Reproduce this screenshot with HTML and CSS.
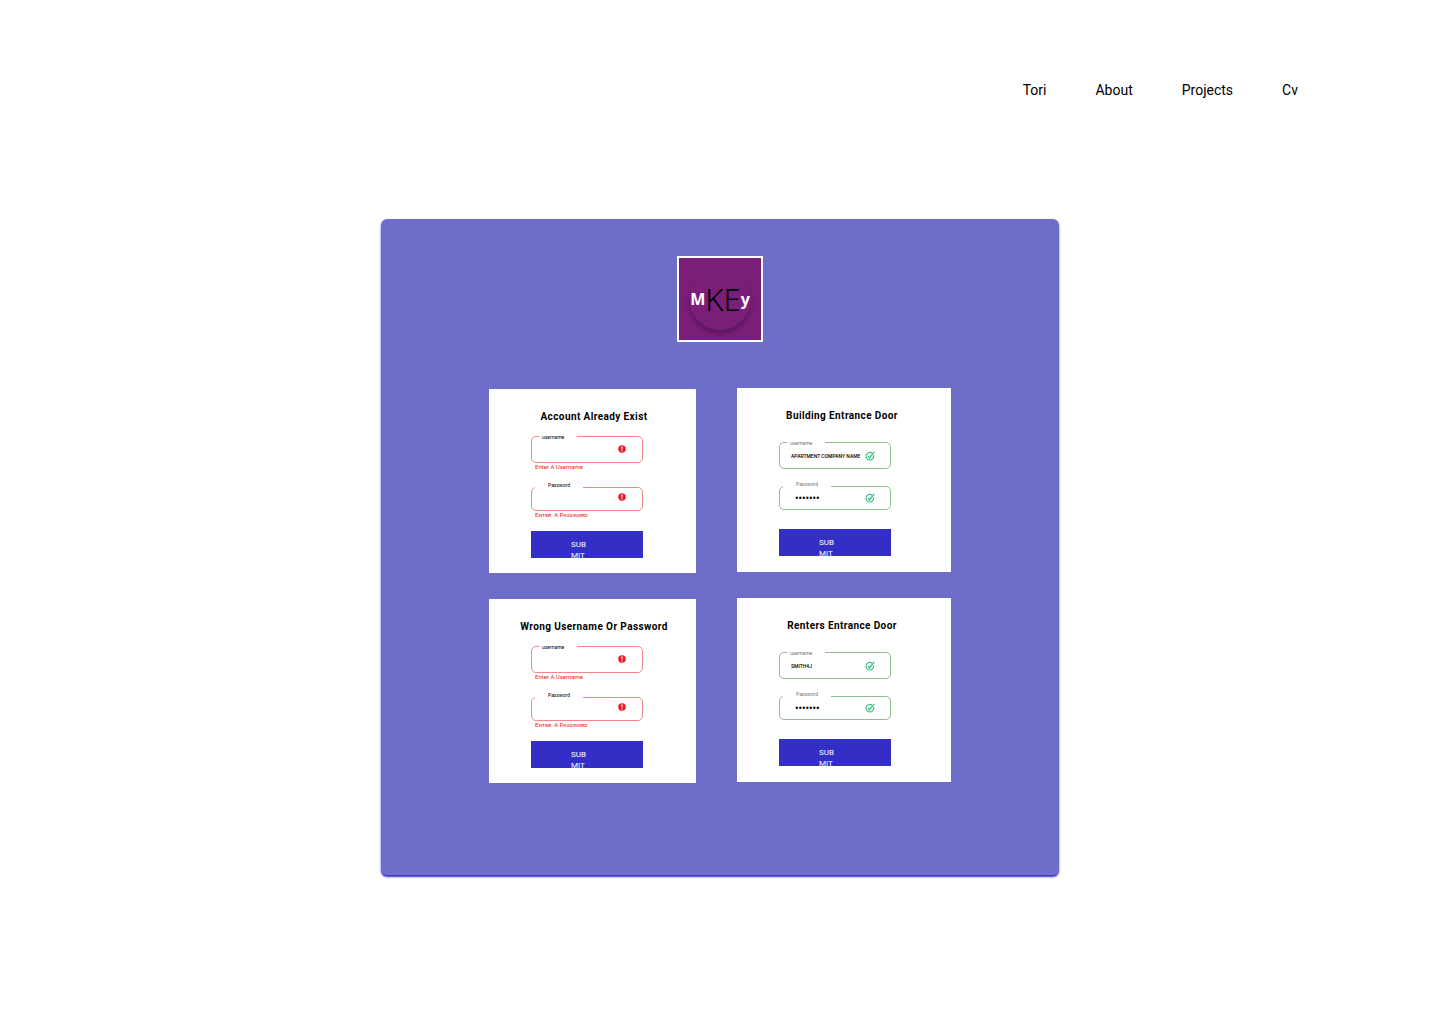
FILE: index.html
```html
<!DOCTYPE html>
<html lang="en">
<head>
<meta charset="utf-8">
<meta name="viewport" content="width=device-width, initial-scale=1">
<title>MKEy</title>
<link rel="stylesheet" href="styles.css">
</head>
<body>
<svg class="sprite" aria-hidden="true">
  <symbol id="icon-error" viewBox="0 0 8 8">
    <circle cx="4" cy="4" r="3.8" fill="#ec1c28"/>
    <path d="M3.3 1.5h1.4L4.4 4.7h-.8z" fill="#fff"/>
    <circle cx="4" cy="5.9" r=".6" fill="#fff"/>
  </symbol>
  <symbol id="icon-check" viewBox="0 0 10 10">
    <path d="M7.3 2.3A3.8 3.8 0 1 0 8.5 4.2" fill="none" stroke="#2fc47c" stroke-width="1.1"/>
    <path d="M3 4.9 4.5 6.9 9.3.8" fill="none" stroke="#2fc47c" stroke-width="1.2"/>
  </symbol>
</svg>

<header class="site-header">
  <nav class="nav">
    <a href="#tori">Tori</a>
    <a href="#about">About</a>
    <a href="#projects">Projects</a>
    <a href="#cv">Cv</a>
  </nav>
</header>

<main class="panel">
  <div class="logo">
    <div class="logo-disc">
      <span class="logo-small">M</span><span class="logo-large">KE</span><span class="logo-small">y</span>
    </div>
  </div>

  <div class="columns">
    <div class="column column-error">
      <form class="card">
        <h2 class="title">Account Already Exist</h2>
        <div class="field field-user">
          <label for="user-1">username</label>
          <input id="user-1" type="text">
          <svg class="icon"><use href="#icon-error"/></svg>
        </div>
        <p class="message">Enter A Username</p>
        <div class="field field-pass">
          <label for="pass-1">Password</label>
          <input id="pass-1" type="password">
          <svg class="icon"><use href="#icon-error"/></svg>
        </div>
        <p class="message message-caps">Enter&nbsp; A Password</p>
        <button class="submit" type="button">SUB<br>MIT</button>
      </form>
      <form class="card">
        <h2 class="title">Wrong Username Or Password</h2>
        <div class="field field-user">
          <label for="user-2">username</label>
          <input id="user-2" type="text">
          <svg class="icon"><use href="#icon-error"/></svg>
        </div>
        <p class="message">Enter A Username</p>
        <div class="field field-pass">
          <label for="pass-2">Password</label>
          <input id="pass-2" type="password">
          <svg class="icon"><use href="#icon-error"/></svg>
        </div>
        <p class="message message-caps">Enter&nbsp; A Password</p>
        <button class="submit" type="button">SUB<br>MIT</button>
      </form>
    </div>

    <div class="column column-valid">
      <form class="card">
        <h2 class="title">Building Entrance Door</h2>
        <div class="field field-user">
          <label for="user-3">username</label>
          <input id="user-3" type="text" value="APARTMENT COMPANY NAME">
          <svg class="icon"><use href="#icon-check"/></svg>
        </div>
        <div class="field field-pass">
          <label for="pass-3">Password</label>
          <input id="pass-3" type="password" value="1234567">
          <svg class="icon"><use href="#icon-check"/></svg>
        </div>
        <button class="submit" type="button">SUB<br>MIT</button>
      </form>
      <form class="card">
        <h2 class="title">Renters Entrance Door</h2>
        <div class="field field-user">
          <label for="user-4">username</label>
          <input id="user-4" type="text" value="SMITH4J">
          <svg class="icon"><use href="#icon-check"/></svg>
        </div>
        <div class="field field-pass">
          <label for="pass-4">Password</label>
          <input id="pass-4" type="password" value="1234567">
          <svg class="icon"><use href="#icon-check"/></svg>
        </div>
        <button class="submit" type="button">SUB<br>MIT</button>
      </form>
    </div>
  </div>
</main>
</body>
</html>
```
FILE: styles.css
```css
* {
  box-sizing: border-box;
}

body {
  margin: 0;
  background: #fff;
  color: #000;
  font-family: Roboto, sans-serif;
}

.sprite {
  display: none;
}

.site-header {
  padding: 80px 142px 0;
}

.nav {
  display: flex;
  justify-content: flex-end;
  gap: 49px;
  font-size: 14px;
  line-height: 20px;
}

.nav a {
  color: inherit;
  text-decoration: none;
}

.panel {
  display: flex;
  flex-direction: column;
  align-items: center;
  gap: 46px;
  max-width: 678px;
  margin: 119px auto 148px;
  padding: 37px 108px 92px;
  background: #6e6dca;
  border-radius: 6px;
  box-shadow: 0 2px 2px #332fc6;
}

.logo {
  display: grid;
  place-items: center;
  width: 86px;
  height: 86px;
  border: 2px solid #fff;
  background: #7b1e7a;
}

.logo-disc {
  display: flex;
  align-items: center;
  justify-content: center;
  width: 62px;
  height: 62px;
  border-radius: 50%;
  box-shadow: 0 4px 4px rgba(0, 0, 0, 0.25);
  font-family: "Noto Sans", "Open Sans", sans-serif;
  line-height: 32px;
}

.logo-small {
  color: #fff;
  font-size: 16px;
  font-weight: 700;
}

.logo-large {
  font-size: 31px;
  font-weight: 300;
}

.columns {
  display: grid;
  grid-template-columns: minmax(0, 207fr) minmax(0, 214fr);
  gap: 41px;
  align-self: stretch;
}

.column {
  display: flex;
  flex-direction: column;
  gap: 26px;
}

.column-error {
  padding-top: 1px;
}

.card {
  display: flex;
  flex-direction: column;
  padding: 22px 53px 15px 42px;
  background: #fff;
}

.column-valid .card {
  padding: 22px 60px 16px 42px;
}

.title {
  align-self: center;
  margin: 0 -40px 13px;
  padding-left: 14px;
  font-size: 10px;
  line-height: 12px;
  font-weight: 700;
  letter-spacing: 0.04em;
  white-space: nowrap;
}

.column-valid .title {
  margin-bottom: 20px;
}

.field {
  position: relative;
  display: flex;
  align-items: center;
  height: 27px;
  padding-right: 16px;
  border: 1px solid #f3868b;
  border-radius: 5px;
}

.field-pass {
  height: 24px;
}

.column-valid .field {
  padding-right: 15px;
  border-color: #8cbf8c;
}

.field label {
  position: absolute;
  top: -4px;
  left: 7px;
  width: 38px;
  padding-left: 3px;
  background: #fff;
  font-size: 5px;
  line-height: 8px;
}

.field-pass label {
  top: -7px;
  left: 3px;
  width: 48px;
  padding-left: 13px;
}

.column-valid label {
  color: #777;
}

.field input {
  flex: 1;
  min-width: 0;
  height: 100%;
  padding: 0 0 0 11px;
  border: 0;
  outline: 0;
  background: none;
  color: #000;
  font-family: inherit;
  font-size: 5px;
  font-weight: 500;
}

.field-pass input {
  padding-left: 15px;
  font-size: 10px;
}

.icon {
  flex: none;
  width: 8px;
  height: 8px;
}

.column-valid .icon {
  width: 10px;
  height: 10px;
}

.column-error .field-user {
  padding-bottom: 2px;
}

.column-error .field-pass {
  padding-bottom: 4px;
}

.message {
  margin: 0 0 16px;
  padding-left: 4px;
  color: #ec1c28;
  font-size: 6px;
  line-height: 8px;
}

.message-caps {
  margin-bottom: 12px;
  font-variant: small-caps;
}

.column-valid .field-user {
  margin-bottom: 17px;
}

.column-valid .field-pass {
  margin-bottom: 19px;
}

.submit {
  display: block;
  height: 27px;
  padding: 8px 40px 0;
  overflow: hidden;
  border: 0;
  background: #332fc6;
  color: #fff;
  font-family: inherit;
  font-size: 8px;
  line-height: 11px;
  text-align: left;
}
```
